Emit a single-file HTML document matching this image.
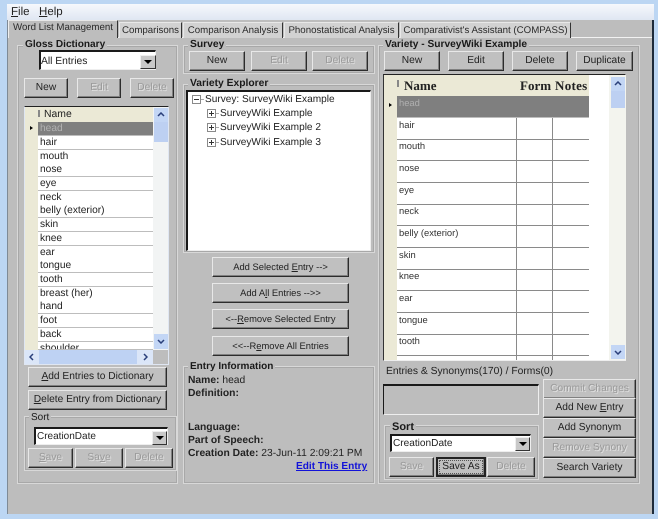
<!DOCTYPE html>
<html><head><meta charset="utf-8">
<style>
html,body{margin:0;padding:0;width:658px;height:519px;overflow:hidden;background:#fff}
body{position:relative;font:10.5px/12px "Liberation Sans",sans-serif;color:#222;text-rendering:geometricPrecision}
#w{position:absolute;left:0;top:0;width:658px;height:519px;filter:blur(.35px)}
#w *{box-sizing:border-box}
#w div,#w a{position:absolute;white-space:nowrap}
.frame{left:0;top:0;width:658px;height:519px;background:#bcd6f3}
.menu{left:7px;top:4px;width:647px;height:16px;background:linear-gradient(#f6f8fc,#dfe6f2)}
.panel{left:7px;top:20px;width:647px;height:494px;background:#bdbdbd;border-right:2px solid #1d2a3a;border-left:1px solid #7f8a96}
.m{top:5px;font-size:11.5px;line-height:14px;color:#222}
.tabline{left:8px;top:37px;width:644px;height:1px;background:#f2f2f2}
.t{top:22px;height:16px;line-height:15px;font-size:9.7px;text-align:center;background:#d2d2d2;border-right:1px solid #333;border-top:1px solid #e8e8e8;border-left:1px solid #e8e8e8;color:#2a2a2a}
.b{background:#c0c0c0;text-align:center;border:1px solid;border-color:#e8e8e8 #2c2c2c #2c2c2c #e8e8e8;box-shadow:inset -1px -1px 0 #808080;font-size:10.2px;color:#222}
.c{font-size:9.4px}
.d{color:#9a9a9a;text-shadow:1px 1px 0 #e0e0e0}
.g{border:1px solid #d8d8d8;outline:1px solid #a8a8a8;outline-offset:-2px}
.l{background:#bdbdbd;font-weight:bold;font-size:10.3px;line-height:12px;padding:0 2px;color:#1a1a1a}
.w{background:#fff}
.in{border:1px solid;border-color:#1a1a1a #eee #eee #1a1a1a;border-top-width:2px;border-left-width:2px}
.arr{background:#c8c8c8;border:1px solid;border-color:#eee #333 #333 #eee}
.arr:after{content:"";position:absolute;left:3px;top:4px;border:4px solid transparent;border-top:4px solid #000;border-bottom:0}
.row{left:38px;width:115px;height:13px;background:#fff;font-size:10.2px;line-height:13px;padding-left:2px;color:#222}
.rh{left:25px;width:13px;background:#ebe9d6}
.R{left:397px;width:192px;height:21px;background:#fff;font-size:9.4px;line-height:13px;padding-left:2px;color:#333}
.v{width:1px;background:#8a8a8a}
.hl{height:1px;background:#8a8a8a}
.tx{font-size:10.3px;line-height:13px;color:#222}
.tb{font-weight:bold}
.box{width:9px;height:9px;background:#fff;border:1px solid #8a8a8a}
.box:before{content:"";position:absolute;left:1px;top:3px;width:5px;height:1px;background:#333}
.plus:after{content:"";position:absolute;left:3px;top:1px;width:1px;height:5px;background:#333}
.dash{width:3px;height:1px;background:#aaa}
.gh{font:bold 13px/15px "Liberation Serif",serif;color:#222}
u{text-decoration:underline}
</style></head><body><div id="w">
<div class="frame"></div>
<div class="panel"></div>
<div class="menu"></div>
<div class="m" style="left:11px"><u>F</u>ile</div>
<div class="m" style="left:39px"><u>H</u>elp</div>
<div class="tabline"></div>
<div class="t" style="left:8px;top:20px;height:18px;width:110px;background:#bdbdbd;line-height:14px;border-left:1px solid #eee">Word List Management</div>
<div class="t" style="left:119px;width:63px">Comparisons</div>
<div class="t" style="left:183px;width:100px">Comparison Analysis</div>
<div class="t" style="left:284px;width:115px">Phonostatistical Analysis</div>
<div class="t" style="left:400px;width:171px">Comparativist's Assistant (COMPASS)</div>

<div class="g" style="left:17px;top:45px;width:161px;height:439px"></div>
<div class="l" style="left:23px;top:39px;font-size:10.1px">Gloss Dictionary</div>
<div class="w in" style="left:39px;top:50px;width:117px;height:20px;padding:3px 0;font-size:10.3px"><span style="position:relative;top:1px">All Entries</span></div>
<div class="arr" style="left:140px;top:55px;width:16px;height:14px"></div>
<div class="b" style="left:24px;top:78px;width:44px;height:20px;line-height:18px">New</div>
<div class="b d" style="left:77px;top:78px;width:44px;height:20px;line-height:18px">Edit</div>
<div class="b d" style="left:130px;top:78px;width:44px;height:20px;line-height:18px">Delete</div>

<div style="left:24px;top:106px;width:145px;height:259px;border:1px solid #dfe6f2;border-top:1px solid #222;background:#bdbdbd"></div>
<div style="left:25px;top:107px;width:143px;height:15px;background:#ebe9d6"></div>
<div class="tx" style="left:44px;top:108px;font-size:10.4px">Name</div>
<div style="left:38px;top:110px;width:2px;height:7px;background:#888"></div>
<div class="rh" style="top:122px;height:241px"></div>
<div style="left:30px;top:126px;border:2.5px solid transparent;border-left:3px solid #000"></div>

<div class="row" style="top:122px;background:#7f7f7f;color:#b2b2b2">head</div>
<div class="row" style="top:136px">hair</div>
<div class="row" style="top:150px">mouth</div>
<div class="row" style="top:163px">nose</div>
<div class="row" style="top:177px">eye</div>
<div class="row" style="top:191px">neck</div>
<div class="row" style="top:204px">belly (exterior)</div>
<div class="row" style="top:218px">skin</div>
<div class="row" style="top:232px">knee</div>
<div class="row" style="top:246px">ear</div>
<div class="row" style="top:259px">tongue</div>
<div class="row" style="top:273px">tooth</div>
<div class="row" style="top:287px">breast (her)</div>
<div class="row" style="top:300px">hand</div>
<div class="row" style="top:314px">foot</div>
<div class="row" style="top:328px">back</div>
<div class="row" style="top:342px;height:7px;overflow:hidden">shoulder</div>
<div style="left:153px;top:107px;width:15px;height:243px;background:#f2f4f4"></div>
<div style="left:154px;top:108px;width:14px;height:14px;background:#c3d6f5"></div>
<div style="left:154px;top:122px;width:14px;height:20px;background:#bdd0f2"></div>
<div style="left:154px;top:334px;width:14px;height:15px;background:#c3d6f5"></div>
<svg style="position:absolute;left:157px;top:112px" width="8" height="5"><path d="M1 4L4 1L7 4" fill="none" stroke="#2a3f7a" stroke-width="1.5"/></svg>
<svg style="position:absolute;left:157px;top:339px" width="8" height="5"><path d="M1 1L4 4L7 1" fill="none" stroke="#2a3f7a" stroke-width="1.5"/></svg>
<div style="left:25px;top:350px;width:128px;height:14px;background:#bed2f3"></div>
<div style="left:25px;top:350px;width:14px;height:14px;background:#dbe6f8"></div>
<div style="left:137px;top:350px;width:16px;height:14px;background:#dbe6f8"></div>
<svg style="position:absolute;left:29px;top:353px" width="5" height="8"><path d="M4 1L1 4L4 7" fill="none" stroke="#2a3f7a" stroke-width="1.5"/></svg>
<svg style="position:absolute;left:143px;top:353px" width="5" height="8"><path d="M1 1L4 4L1 7" fill="none" stroke="#2a3f7a" stroke-width="1.5"/></svg>

<div class="b" style="left:28px;top:367px;width:139px;height:20px;line-height:18px"><u>A</u>dd Entries to Dictionary</div>
<div class="b" style="left:28px;top:390px;width:139px;height:20px;line-height:18px"><u>D</u>elete Entry from Dictionary</div>
<div class="g" style="left:24px;top:416px;width:153px;height:55px"></div>
<div class="l" style="left:29px;top:412px;font-weight:normal;font-size:10px">Sort</div>
<div class="w in" style="left:34px;top:427px;width:134px;height:18px;padding:2px 1px;font-size:10px">CreationDate</div>
<div class="arr" style="left:152px;top:431px;width:15px;height:14px"></div>
<div class="b d" style="left:28px;top:448px;width:45px;height:20px;line-height:18px"><u>S</u>ave</div>
<div class="b d" style="left:75px;top:448px;width:48px;height:20px;line-height:18px">Sa<u>v</u>e</div>
<div class="b d" style="left:125px;top:448px;width:48px;height:20px;line-height:18px">Delete</div>

<div class="g" style="left:183px;top:45px;width:192px;height:29px"></div>
<div class="l" style="left:188px;top:39px">Survey</div>
<div class="b" style="left:189px;top:51px;width:56px;height:20px;line-height:18px">New</div>
<div class="b d" style="left:251px;top:51px;width:56px;height:20px;line-height:18px">Edit</div>
<div class="b d" style="left:312px;top:51px;width:56px;height:20px;line-height:18px">Delete</div>

<div class="g" style="left:183px;top:84px;width:192px;height:169px"></div>
<div class="l" style="left:188px;top:78px">Variety Explorer</div>
<div class="w in" style="left:186px;top:90px;width:185px;height:161px"></div>
<div class="box" style="left:192px;top:95px"></div>
<div class="dash" style="left:201px;top:99px"></div>
<div class="tx" style="left:205px;top:93px;font-size:10.1px">Survey: SurveyWiki Example</div>
<div class="box plus" style="left:207px;top:109px"></div>
<div class="dash" style="left:216px;top:113px"></div>
<div class="tx" style="left:220px;top:107px;font-size:10.1px">SurveyWiki Example</div>
<div class="box plus" style="left:207px;top:123px"></div>
<div class="dash" style="left:216px;top:127px"></div>
<div class="tx" style="left:220px;top:121px;font-size:10.1px">SurveyWiki Example 2</div>
<div class="box plus" style="left:207px;top:138px"></div>
<div class="dash" style="left:216px;top:142px"></div>
<div class="tx" style="left:220px;top:136px;font-size:10.1px">SurveyWiki Example 3</div>

<div class="b c" style="left:212px;top:257px;width:137px;height:20px;line-height:18px">Add Selected <u>E</u>ntry --&gt;</div>
<div class="b c" style="left:212px;top:283px;width:137px;height:20px;line-height:18px">Add A<u>l</u>l Entries --&gt;&gt;</div>
<div class="b c" style="left:212px;top:309px;width:137px;height:20px;line-height:18px">&lt;--<u>R</u>emove Selected Entry</div>
<div class="b c" style="left:212px;top:336px;width:137px;height:20px;line-height:18px">&lt;&lt;--R<u>e</u>move All Entries</div>

<div class="g" style="left:183px;top:366px;width:192px;height:118px"></div>
<div class="l" style="left:188px;top:361px;font-size:10px">Entry Information</div>
<div class="tx" style="left:188px;top:374px"><span class="tb">Name:</span> head</div>
<div class="tx tb" style="left:188px;top:387px">Definition:</div>
<div class="tx tb" style="left:188px;top:421px">Language:</div>
<div class="tx tb" style="left:188px;top:434px">Part of Speech:</div>
<div class="tx" style="left:188px;top:447px"><span class="tb">Creation Date:</span> 23-Jun-11 2:09:21 PM</div>
<a class="tx tb" style="left:296px;top:460px;font-size:10.1px;color:#1212d8;text-decoration:underline">Edit This Entry</a>

<div class="g" style="left:378px;top:45px;width:262px;height:439px"></div>
<div class="l" style="left:383px;top:39px;font-size:10.2px">Variety - SurveyWiki Example</div>
<div class="b" style="left:384px;top:51px;width:56px;height:20px;line-height:18px">New</div>
<div class="b" style="left:448px;top:51px;width:56px;height:20px;line-height:18px">Edit</div>
<div class="b" style="left:512px;top:51px;width:56px;height:20px;line-height:18px">Delete</div>
<div class="b" style="left:576px;top:51px;width:57px;height:20px;line-height:18px">Duplicate</div>

<div style="left:383px;top:74px;width:243px;height:287px;background:#bdbdbd;border-top:1px solid #222;border-right:1px solid #eee;border-bottom:1px solid #eee;border-left:1px solid #333"></div>
<div style="left:384px;top:75px;width:205px;height:21px;background:#ebe9d6"></div>
<div style="left:589px;top:75px;width:20px;height:285px;background:#fff"></div>
<div class="rh" style="left:384px;top:96px;width:13px;height:264px"></div>
<div style="left:397px;top:80px;width:2px;height:7px;background:#888"></div>
<div class="gh" style="left:404px;top:78px">Name</div>
<div class="gh" style="left:520px;top:78px">Form</div>
<div class="gh" style="left:555px;top:78px;letter-spacing:.3px">Notes</div>
<div style="left:389px;top:103px;border:2.5px solid transparent;border-left:3px solid #000"></div>
<div class="R" style="top:96px;background:#7f7f7f;color:#b0b0b0">head</div>
<div class="R" style="top:118px">hair</div>
<div class="R" style="top:139px">mouth</div>
<div class="R" style="top:161px">nose</div>
<div class="R" style="top:183px">eye</div>
<div class="R" style="top:204px">neck</div>
<div class="R" style="top:226px">belly (exterior)</div>
<div class="R" style="top:248px">skin</div>
<div class="R" style="top:269px">knee</div>
<div class="R" style="top:291px">ear</div>
<div class="R" style="top:313px">tongue</div>
<div class="R" style="top:334px">tooth</div>
<div class="R" style="top:356px;height:4px"></div>
<div class="v" style="left:516px;top:118px;height:242px"></div>
<div class="v" style="left:552px;top:118px;height:242px"></div>
<div class="hl" style="left:397px;width:192px;top:139px"></div>
<div class="hl" style="left:397px;width:192px;top:160px"></div>
<div class="hl" style="left:397px;width:192px;top:182px"></div>
<div class="hl" style="left:397px;width:192px;top:204px"></div>
<div class="hl" style="left:397px;width:192px;top:225px"></div>
<div class="hl" style="left:397px;width:192px;top:247px"></div>
<div class="hl" style="left:397px;width:192px;top:269px"></div>
<div class="hl" style="left:397px;width:192px;top:290px"></div>
<div class="hl" style="left:397px;width:192px;top:312px"></div>
<div class="hl" style="left:397px;width:192px;top:334px"></div>
<div class="hl" style="left:397px;width:192px;top:355px"></div>
<div style="left:609px;top:75px;width:17px;height:285px;background:#f3f4ee"></div>
<div style="left:611px;top:77px;width:14px;height:14px;background:#c3d6f5"></div>
<div style="left:611px;top:91px;width:14px;height:17px;background:#bdd0f2"></div>
<div style="left:611px;top:345px;width:14px;height:14px;background:#c3d6f5"></div>
<svg style="position:absolute;left:614px;top:81px" width="8" height="5"><path d="M1 4L4 1L7 4" fill="none" stroke="#2a3f7a" stroke-width="1.5"/></svg>
<svg style="position:absolute;left:614px;top:350px" width="8" height="5"><path d="M1 1L4 4L7 1" fill="none" stroke="#2a3f7a" stroke-width="1.5"/></svg>

<div class="tx" style="left:386px;top:365px">Entries &amp; Synonyms(170) / Forms(0)</div>
<div class="in" style="left:383px;top:384px;width:156px;height:31px;border-width:2px 1px 1px 1px"></div>
<div class="b d" style="left:543px;top:379px;width:93px;height:20px;line-height:18px">Commit Changes</div>
<div class="b" style="left:543px;top:398px;width:93px;height:20px;line-height:18px">Add New <u>E</u>ntry</div>
<div class="b" style="left:543px;top:418px;width:93px;height:20px;line-height:18px">Add Synonym</div>
<div class="b d" style="left:543px;top:438px;width:93px;height:20px;line-height:18px">Remove Synony</div>
<div class="b" style="left:543px;top:458px;width:93px;height:20px;line-height:18px">Search Variety</div>

<div class="g" style="left:384px;top:425px;width:155px;height:55px"></div>
<div class="l" style="left:390px;top:421px;font-size:11px">Sort</div>
<div class="w in" style="left:390px;top:434px;width:141px;height:18px;padding:2px 1px;font-size:10.1px">CreationDate</div>
<div class="arr" style="left:515px;top:437px;width:15px;height:14px"></div>
<div class="b d" style="left:389px;top:457px;width:45px;height:20px;line-height:18px">Save</div>
<div class="b" style="left:436px;top:457px;width:50px;height:20px;line-height:16px;border:2px solid #222;outline:1px dotted #555;outline-offset:-4px">Save As</div>
<div class="b d" style="left:487px;top:457px;width:48px;height:20px;line-height:18px">Delete</div>
</div></body></html>
